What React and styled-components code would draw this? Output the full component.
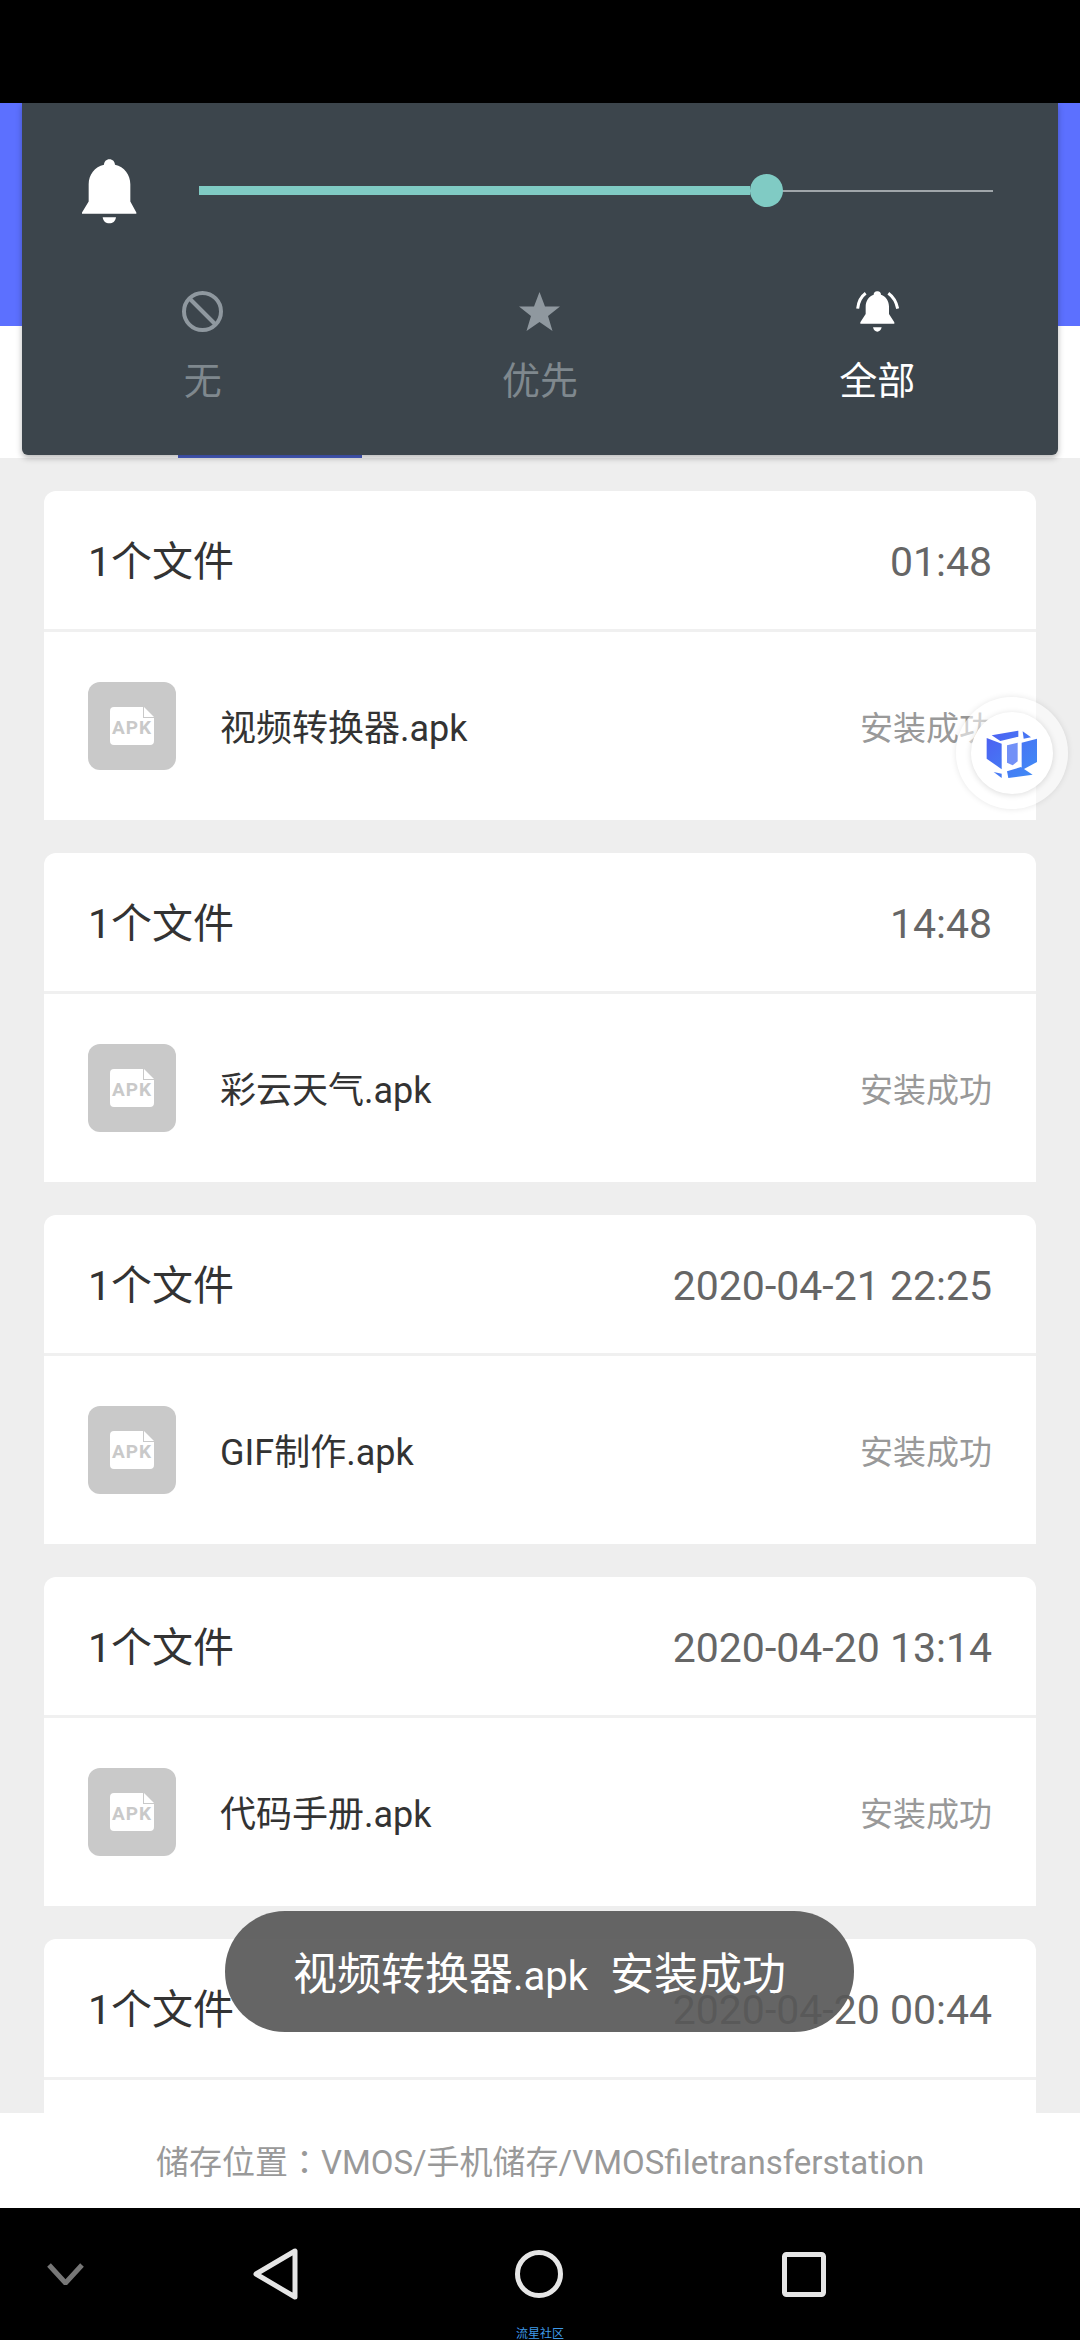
import React from "react";
import styled, { createGlobalStyle } from "styled-components";

const Global = createGlobalStyle`
  html, body { margin: 0; padding: 0; background: #000; }
  * { box-sizing: border-box; }
`;

const Screen = styled.div`
  position: relative;
  width: 1080px;
  height: 2340px;
  overflow: hidden;
  display: flex;
  flex-direction: column;
  background: #eeeeee;
  font-family: Roboto, "Noto Sans CJK SC", sans-serif;
`;
const StatusBar = styled.div`
  flex: none;
  height: 103px;
  background: #000;
`;
const Header = styled.div`
  flex: none;
  height: 223px;
  background: #5c70ff;
`;
const Tabs = styled.div`
  flex: none;
  height: 132px;
  background: #fff;
  display: flex;
  align-items: flex-end;
  padding-left: 178px;
`;
const TabIndicator = styled.div`
  width: 184px;
  height: 3px;
  background: #4a60c8;
`;
const List = styled.div`
  flex: 1;
  min-height: 0;
  overflow: hidden;
  padding: 33px 44px 0;
  display: flex;
  flex-direction: column;
  gap: 33px;
`;
const Card = styled.section`
  flex: none;
  height: 329px;
  background: #fff;
  border-radius: 12px 12px 0 0;
  display: flex;
  flex-direction: column;
`;
const CardHead = styled.div`
  flex: none;
  height: 141px;
  padding: 43px 44px 0;
  border-bottom: 3px solid #f0f0f0;
  display: flex;
  align-items: baseline;
  justify-content: space-between;
  line-height: 56px;
`;
const CardTitle = styled.span`
  font-size: 41px;
  color: #333;
`;
const CardTime = styled.span`
  font-size: 41px;
  color: #666;
`;
const CardBody = styled.div`
  flex: 1;
  padding: 0 44px;
  display: flex;
  align-items: center;
`;
const FileBadge = styled.div`
  flex: none;
  width: 88px;
  height: 88px;
  border-radius: 12px;
  background: #c9c9c9;
  display: flex;
  align-items: center;
  justify-content: center;
  margin-right: 44px;
`;
const FileName = styled.span`
  flex: 1;
  font-size: 36px;
  color: #333;
  padding-bottom: 3px;
`;
const FileStatus = styled.span`
  font-size: 33px;
  color: #999;
`;
const Footer = styled.div`
  flex: none;
  height: 95px;
  background: #fff;
  display: flex;
  align-items: center;
  justify-content: center;
  font-size: 33px;
  color: #999;
  padding-bottom: 2px;
`;
const Colon = styled.span`
  font-family: "Noto Sans CJK TC", sans-serif;
`;
const NavBar = styled.nav`
  flex: none;
  height: 132px;
  background: #000;
  display: flex;
  align-items: center;
  padding-left: 47px;
`;
const NavKey = styled.svg`
  flex: none;
  display: block;
  margin-left: ${(p) => p.$gap || 0}px;
`;
const Watermark = styled.span`
  position: absolute;
  left: 515px;
  top: 2327px;
  width: 50px;
  text-align: center;
  font-size: 12px;
  line-height: 14px;
  color: #3f9ae8;
`;
const VolumePanel = styled.div`
  position: absolute;
  left: 22px;
  top: 103px;
  width: 1036px;
  height: 352px;
  background: #3c454c;
  border-radius: 0 0 6px 6px;
  box-shadow: 0 3px 6px rgba(0, 0, 0, 0.28);
  display: flex;
  flex-direction: column;
`;
const SliderRow = styled.div`
  flex: none;
  height: 176px;
  padding-left: 60px;
  display: flex;
  align-items: center;
`;
const Track = styled.div`
  position: relative;
  width: 794px;
  height: 2px;
  margin-left: 62px;
  background: #a0a6aa;
`;
const TrackFill = styled.div`
  position: absolute;
  left: 0;
  top: -4px;
  height: 9px;
  background: #80cbc4;
`;
const Thumb = styled.div`
  position: absolute;
  top: -16px;
  width: 33px;
  height: 33px;
  margin-left: -16px;
  border-radius: 50%;
  background: #80cbc4;
`;
const Modes = styled.div`
  flex: none;
  padding: 12px 12px 0;
  display: grid;
  grid-template-columns: repeat(3, 1fr);
`;
const Mode = styled.div`
  display: flex;
  flex-direction: column;
  align-items: center;
  color: ${(p) => (p.$active ? "#fff" : "#7f888e")};
`;
const ModeIcon = styled.svg`
  display: block;
  height: 41px;
`;
const ModeLabel = styled.span`
  margin-top: 25px;
  font-size: 38px;
  line-height: 48px;
`;
const Toast = styled.div`
  position: absolute;
  left: 225px;
  top: 1911px;
  width: 629px;
  height: 121px;
  border-radius: 60px;
  background: rgba(88, 88, 88, 0.92);
  color: #fff;
  font-size: 44px;
  white-space: pre;
  padding-bottom: 2px;
  display: flex;
  align-items: center;
  justify-content: center;
`;
const ToastLatin = styled.span`
  font-size: 40px;
`;
const Fab = styled.div`
  position: absolute;
  left: 956px;
  top: 697px;
  width: 112px;
  height: 112px;
  border-radius: 50%;
  background: rgba(255, 255, 255, 0.55);
  box-shadow: 0 0 6px rgba(0, 0, 0, 0.1);
  display: flex;
  align-items: center;
  justify-content: center;
`;
const FabCore = styled.div`
  width: 82px;
  height: 82px;
  border-radius: 50%;
  background: #fff;
  box-shadow: 0 1px 6px rgba(0, 0, 0, 0.14);
  display: flex;
  align-items: center;
  justify-content: center;
`;

const BELL = "M147 58c-9 0-16 7-16 17c-28 6-46 30-46 58v52L65 218v4h163v-4l-18-33v-52c0-28-18-52-46-58c0-10-7-17-17-17zM127 232h40c-2 13-10 18-20 18s-18-5-20-18z";

const rows = [
  ["01:48", "视频转换器.apk"],
  ["14:48", "彩云天气.apk"],
  ["2020-04-21 22:25", "GIF制作.apk"],
  ["2020-04-20 13:14", "代码手册.apk"],
  ["2020-04-20 00:44", null],
];

const ApkIcon = () => (
  <svg width="44" height="38" viewBox="0 0 44 38">
    <path d="M4 0H33V11H44V34a4 4 0 0 1-4 4H4a4 4 0 0 1-4-4V4a4 4 0 0 1 4-4z" fill="#fff" />
    <path d="M34 0L44 10H34z" fill="#fff" />
    <text x="2" y="27" fontFamily="Roboto, sans-serif" fontSize="19" fontWeight="700" fill="#c9c9c9" textLength="39">APK</text>
  </svg>
);

const CubeLogo = () => (
  <svg width="82" height="82" viewBox="0 0 246 246">
    <defs>
      <linearGradient id="cube" gradientUnits="userSpaceOnUse" x1="50" y1="60" x2="200" y2="200">
        <stop offset="0" stopColor="#4d5ff2" />
        <stop offset="1" stopColor="#3f8ff6" />
      </linearGradient>
    </defs>
    <g fill="url(#cube)">
      <polygon points="62,70 142,56 142,74 88,87" />
      <polygon points="155,58 180,76 158,80" />
      <polygon points="47,78 92,95 92,172 47,140" />
      <polygon points="152,92 198,80 198,150 152,175" />
      <polygon points="108,178 150,165 185,188 112,198" />
      <polygon points="68,180 92,185 92,198" />
    </g>
    <polygon points="108,100 140,92 140,148 125,160 108,152" fill="#7391f7" />
  </svg>
);

export default function App() {
  return (
    <Screen>
      <Global />
      <StatusBar />
      <Header />
      <Tabs>
        <TabIndicator />
      </Tabs>
      <List>
        {rows.map(([time, name]) => (
          <Card key={time}>
            <CardHead>
              <CardTitle>1个文件</CardTitle>
              <CardTime>{time}</CardTime>
            </CardHead>
            {name && (
              <CardBody>
                <FileBadge>
                  <ApkIcon />
                </FileBadge>
                <FileName>{name}</FileName>
                <FileStatus>安装成功</FileStatus>
              </CardBody>
            )}
          </Card>
        ))}
      </List>
      <Footer>
        <span>
          储存位置<Colon>：</Colon>VMOS/手机储存/VMOSfiletransferstation
        </span>
      </Footer>
      <NavBar>
        <NavKey width="37" height="22" viewBox="0 0 37 22">
          <polyline points="2,2 18.5,20 35,2" fill="none" stroke="#777" strokeWidth="5" />
        </NavKey>
        <NavKey $gap={169} width="45" height="52" viewBox="0 0 45 52">
          <path d="M42 3V49L3 26Z" fill="none" stroke="#e6e6e6" strokeWidth="5" strokeLinejoin="round" />
        </NavKey>
        <NavKey $gap={217} width="48" height="48" viewBox="0 0 48 48">
          <circle cx="24" cy="24" r="21.5" fill="none" stroke="#e6e6e6" strokeWidth="5" />
        </NavKey>
        <NavKey $gap={219} width="44" height="45" viewBox="0 0 44 45">
          <rect x="2.500" y="2.500" width="39" height="40" rx="2" fill="none" stroke="#e6e6e6" strokeWidth="5" />
        </NavKey>
      </NavBar>
      <Watermark>流星社区</Watermark>

      <VolumePanel>
        <SliderRow>
          <svg width="55" height="66" viewBox="65 55 165 197">
            <path d={BELL} fill="#fff" />
          </svg>
          <Track>
            <TrackFill style={{ width: "551px" }} />
            <Thumb style={{ left: "567px" }} />
          </Track>
        </SliderRow>
        <Modes>
          <Mode>
            <ModeIcon width="41" viewBox="0 0 41 41">
              <circle cx="20.5" cy="20.5" r="18.5" fill="none" stroke="#8f989f" strokeWidth="4" />
              <line x1="7.5" y1="7.5" x2="33.5" y2="33.5" stroke="#8f989f" strokeWidth="4" />
            </ModeIcon>
            <ModeLabel>无</ModeLabel>
          </Mode>
          <Mode>
            <ModeIcon width="41" viewBox="0 0 41 41">
              <polygon points="20.5,1 26,15.5 41,15.5 29,25 33.5,40 20.5,31 7.5,40 12,25 0,15.5 15,15.5" fill="#8f989f" />
            </ModeIcon>
            <ModeLabel>优先</ModeLabel>
          </Mode>
          <Mode $active>
            <ModeIcon width="45" viewBox="42 33 135 123">
              <path d="M108 34c-6 0-10 4-10 10c-15 4-24 20-24 36v22L58 127v4h102v-4l-16-25V80c0-16-9-32-24-36c0-6-4-10-10-10zM96 142h26c-2 9-7 13-13 13s-11-4-13-13z" fill="#fff" />
              <path d="M74 40C60 50 52 66 50 86M142 40C156 50 166 66 170 86" fill="none" stroke="#fff" strokeWidth="9" />
            </ModeIcon>
            <ModeLabel>全部</ModeLabel>
          </Mode>
        </Modes>
      </VolumePanel>

      <Fab>
        <FabCore>
          <CubeLogo />
        </FabCore>
      </Fab>
      <Toast>
        <span>
          视频转换器<ToastLatin>.apk</ToastLatin>{"  "}安装成功
        </span>
      </Toast>
    </Screen>
  );
}
